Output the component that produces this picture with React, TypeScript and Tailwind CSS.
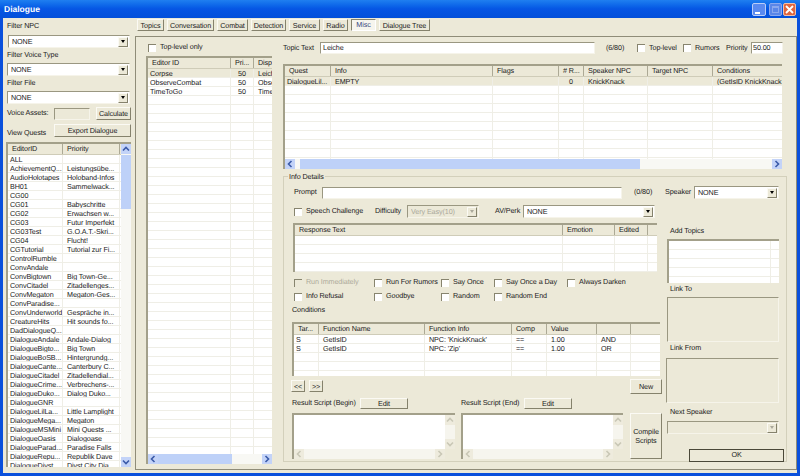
import React from "react";

const quests: [string, string][] = [
  ["ALL", ""],
  ["AchievementQ...", "Leistungsübe..."],
  ["AudioHolotapes", "Holoband-Infos"],
  ["BH01", "Sammelwack..."],
  ["CG00", ""],
  ["CG01", "Babyschritte"],
  ["CG02", "Erwachsen w..."],
  ["CG03", "Futur Imperfekt"],
  ["CG03Test", "G.O.A.T.-Skri..."],
  ["CG04", "Flucht!"],
  ["CGTutorial", "Tutorial zur Fi..."],
  ["ControlRumble", ""],
  ["ConvAndale", ""],
  ["ConvBigtown", "Big Town-Ge..."],
  ["ConvCitadel", "Zitadellenges..."],
  ["ConvMegaton", "Megaton-Ges..."],
  ["ConvParadise...", ""],
  ["ConvUnderworld", "Gespräche in..."],
  ["CreatureHits", "Hit sounds fo..."],
  ["DadDialogueQ...", ""],
  ["DialogueAndale", "Andale-Dialog"],
  ["DialogueBigto...", "Big Town"],
  ["DialogueBoSB...", "Hintergrundg..."],
  ["DialogueCante...", "Canterbury C..."],
  ["DialogueCitadel", "Zitadellendial..."],
  ["DialogueCrime...", "Verbrechens-..."],
  ["DialogueDuko...", "Dialog Duko..."],
  ["DialogueGNR", ""],
  ["DialogueLilLa...", "Little Lamplight"],
  ["DialogueMega...", "Megaton"],
  ["DialogueMSMini", "Mini Quests ..."],
  ["DialogueOasis", "Dialogoase"],
  ["DialogueParad...", "Paradise Falls"],
  ["DialogueRepu...", "Republik Dave"],
  ["DialogueDivst...", "Divst City Dia..."],
];

const sunken = "border border-t-[#9a9781] border-l-[#9a9781] border-r-[#f6f4ea] border-b-[#f6f4ea]";
const raised = "border border-t-[#fbfaf4] border-l-[#fbfaf4] border-r-[#85826c] border-b-[#85826c]";

function Arrow({ dir, faded }: { dir: "up" | "down" | "left" | "right"; faded?: boolean }) {
  const d = {
    up: "M2 6.5 L5 3.5 L8 6.5",
    down: "M2 3.5 L5 6.5 L8 3.5",
    left: "M6.5 2 L3.5 5 L6.5 8",
    right: "M3.5 2 L6.5 5 L3.5 8",
  }[dir];
  return (
    <div className={`w-[10px] h-[10px] shrink-0 ${faded ? "bg-[#eeebdd]" : "bg-[#c3d3f8]"}`}>
      <svg viewBox="0 0 10 10" className="w-full h-full">
        <path d={d} fill="none" stroke={faded ? "#c9c7b6" : "#3a5aa8"} strokeWidth="1.6" />
      </svg>
    </div>
  );
}

function HScroll({ thumb }: { thumb: string }) {
  return (
    <div className="flex h-[10px] shrink-0 bg-[#f8f8f4]">
      <Arrow dir="left" />
      <div className={`${thumb} bg-[#bed1f8]`} />
      <div className="flex-1" />
      <Arrow dir="right" />
    </div>
  );
}

function Table({
  cols,
  headers,
  rows,
  count,
  selected,
  center,
  noHeader,
  className,
  footer,
  side,
}: {
  cols: string;
  headers: string[];
  rows: string[][];
  count: number;
  selected?: number;
  center?: number[];
  noHeader?: boolean;
  className?: string;
  footer?: React.ReactNode;
  side?: React.ReactNode;
}) {
  const filled = Array.from({ length: count }, (_, i) => rows[i] ?? headers.map(() => ""));
  return (
    <div className={`flex flex-col bg-white overflow-hidden border-t-2 border-l-2 border-t-[#a3a08a] border-l-[#a3a08a] ${className}`}>
      <div className="flex flex-1 min-h-0">
        <div className="flex-1 min-w-0 flex flex-col overflow-hidden">
          {!noHeader && (
            <div className={`grid ${cols} h-[11px] shrink-0 bg-[#ece9d8] border-b border-[#cfccb8]`}>
              {headers.map((h, i) => (
                <div key={i} className="border-r border-[#aca995] pl-[4px] leading-[10px] whitespace-nowrap overflow-hidden">
                  {h}
                </div>
              ))}
            </div>
          )}
          <div className="flex-1 min-h-0 overflow-hidden">
            {filled.map((r, i) => (
              <div key={i} className={`grid ${cols} h-[9px] border-b border-[#efeee6] ${i === selected ? "bg-[#ece9d8]" : ""}`}>
                {r.map((c, j) => (
                  <div
                    key={j}
                    className={`border-r border-[#efeee6] leading-[9px] whitespace-nowrap overflow-hidden ${
                      center?.includes(j) ? "text-center" : j === 0 ? "pl-[2px]" : "pl-[4px]"
                    }`}
                  >
                    {c}
                  </div>
                ))}
              </div>
            ))}
          </div>
        </div>
        {side}
      </div>
      {footer}
    </div>
  );
}

function Select({ value, className, disabled }: { value: string; className: string; disabled?: boolean }) {
  return (
    <div className={`flex items-center h-[13px] shrink-0 pl-[3px] pr-[1px] ${sunken} ${disabled ? "bg-[#ece9d8] text-[#aaa89a]" : "bg-white"} ${className}`}>
      <span className="flex-1 leading-[10px] whitespace-nowrap overflow-hidden">{value}</span>
      <div className={`w-[10px] h-[10px] flex items-center justify-center bg-[#ece9d8] ${raised}`}>
        <div className={`border-x-[2.5px] border-x-transparent border-t-[3px] ${disabled ? "border-t-[#aaa89a]" : "border-t-black"}`} />
      </div>
    </div>
  );
}

function Check({ label, className, disabled }: { label: string; className?: string; disabled?: boolean }) {
  return (
    <div className={`flex items-center h-[9px] shrink-0 ${className ?? ""}`}>
      <div className={`w-[8px] h-[8px] shrink-0 border-t border-l border-[#87846e] ${disabled ? "bg-[#ece9d8]" : "bg-white"}`} />
      <span className={`ml-[4px] whitespace-nowrap ${disabled ? "text-[#aca99a]" : ""}`}>{label}</span>
    </div>
  );
}

function Btn({ children, className }: { children: React.ReactNode; className: string }) {
  return (
    <div className={`flex items-center justify-center text-center leading-[9px] shrink-0 bg-[#ece9d8] ${raised} ${className}`}>
      {children}
    </div>
  );
}

function ScriptBox({ className }: { className: string }) {
  return (
    <div className={`flex flex-col h-[46px] bg-white border-t-2 border-l-2 border-t-[#a3a08a] border-l-[#a3a08a] ${className}`}>
      <div className="flex flex-1">
        <div className="flex-1" />
        <div className="flex flex-col justify-between w-[10px] bg-[#f6f5ee]">
          <Arrow dir="up" faded />
          <Arrow dir="down" faded />
        </div>
      </div>
      <div className="flex h-[10px] bg-[#f6f5ee]">
        <Arrow dir="left" faded />
        <div className="flex-1" />
        <Arrow dir="right" faded />
        <div className="w-[10px] bg-[#ece9d8]" />
      </div>
    </div>
  );
}

const tabs: [string, string][] = [
  ["Topics", "w-[27px]"],
  ["Conversation", "w-[47px]"],
  ["Combat", "w-[31px]"],
  ["Detection", "w-[35px]"],
  ["Service", "w-[31px]"],
  ["Radio", "w-[25px]"],
  ["Misc", "w-[25px]"],
  ["Dialogue Tree", "w-[51px]"],
];

function LeftColumn() {
  return (
    <div className="w-[132px] shrink-0 pl-[4px] flex flex-col">
      <div className="mt-[3px] h-[10px] leading-[10px]">Filter NPC</div>
      <Select value="NONE" className="mt-[4px] ml-[1px] w-[122px]" />
      <div className="mt-[2px] h-[10px] leading-[10px]">Filter Voice Type</div>
      <Select value="NONE" className="mt-[3px] w-[123px]" />
      <div className="mt-[2px] h-[10px] leading-[10px]">Filter File</div>
      <Select value="NONE" className="mt-[3px] w-[123px]" />
      <div className="mt-[3px] flex items-center h-[13px]">
        <span className="w-[47px] whitespace-nowrap">Voice Assets:</span>
        <div className={`w-[36px] h-[12px] ${sunken}`} />
        <Btn className="ml-[6px] w-[35px] h-[13px]">Calculate</Btn>
      </div>
      <div className="mt-[4px] flex items-end h-[13px]">
        <span className="w-[47px] leading-[9px] whitespace-nowrap">View Quests</span>
        <Btn className="w-[77px] h-[13px]">Export Dialogue</Btn>
      </div>
      <Table
        className="mt-[5px] -ml-[1px] w-[125px] h-[325px]"
        cols="grid-cols-[55px_57px]"
        headers={["EditorID", "Priority"]}
        rows={quests.map((q) => [q[0], q[1]])}
        count={35}
        side={
          <div className="w-[10px] shrink-0 flex flex-col bg-[#f8f8f4]">
            <Arrow dir="up" />
            <div className="h-[54px] mt-px bg-[#bed1f8]" />
            <div className="flex-1" />
            <Arrow dir="down" />
          </div>
        }
      />
    </div>
  );
}

function TopicColumn() {
  return (
    <div className="w-[126px] shrink-0 ml-[10px] flex flex-col">
      <Check label="Top-level only" className="mt-[6px] ml-[2px]" />
      <Table
        className="mt-[4px] h-[408px]"
        cols="grid-cols-[83px_23px_20px]"
        headers={["Editor ID", "Pri...", "Disp"]}
        rows={[
          ["Corpse", "50", "Leich"],
          ["ObserveCombat", "50", "Obse"],
          ["TimeToGo", "50", "Time"],
        ]}
        count={43}
        selected={0}
        center={[1]}
        footer={<HScroll thumb="w-[74px]" />}
      />
    </div>
  );
}

function InfoDetails() {
  return (
    <div className="relative mt-[7px] w-[504px] h-[286px] border border-[#d3d0bb]">
      <div className="absolute -top-[5px] left-[4px] px-[1px] bg-[#ece9d8] leading-[10px]">Info Details</div>
      <div className="mt-[9px] ml-[10px] flex items-center h-[13px]">
        <span className="w-[28px]">Prompt</span>
        <div className={`w-[300px] h-[12px] bg-white ${sunken}`} />
        <span className="ml-[12px] w-[31px]">(0/80)</span>
        <span className="w-[29px]">Speaker</span>
        <Select value="NONE" className="w-[85px]" />
      </div>
      <div className="flex">
        <div className="w-[378px] shrink-0 pl-[8px] flex flex-col">
          <div className="mt-[6px] ml-[2px] flex items-center h-[13px]">
            <Check label="Speech Challenge" className="w-[81px]" />
            <span className="w-[32px]">Difficulty</span>
            <Select value="Very Easy(10)" disabled className="w-[72px]" />
            <span className="ml-[16px] w-[28px] whitespace-nowrap">AV/Perk</span>
            <Select value="NONE" className="w-[132px]" />
          </div>
          <Table
            className="mt-[5px] ml-[1px] w-[364px] h-[49px]"
            cols="grid-cols-[268px_52px_33px_11px]"
            headers={["Response Text", "Emotion", "Edited", ""]}
            rows={[]}
            count={4}
          />
          <div className="mt-[6px] ml-[2px] flex">
            <Check label="Run Immediately" disabled className="w-[80px]" />
            <Check label="Run For Rumors" className="w-[67px]" />
            <Check label="Say Once" className="w-[53px]" />
            <Check label="Say Once a Day" className="w-[73px]" />
            <Check label="Always Darken" />
          </div>
          <div className="mt-[5px] ml-[2px] flex">
            <Check label="Info Refusal" className="w-[80px]" />
            <Check label="Goodbye" className="w-[67px]" />
            <Check label="Random" className="w-[53px]" />
            <Check label="Random End" />
          </div>
          <div className="mt-[4px] h-[10px] leading-[10px]">Conditions</div>
          <Table
            className="mt-[7px] w-[368px] h-[54px]"
            cols="grid-cols-[25px_106px_87px_35px_50px_34px_31px]"
            headers={["Tar...", "Function Name", "Function Info", "Comp", "Value", "", ""]}
            rows={[
              ["S", "GetIsID", "NPC: 'KnickKnack'", "==", "1.00", "AND", ""],
              ["S", "GetIsID", "NPC: 'Zip'", "==", "1.00", "OR", ""],
            ]}
            count={5}
          />
          <div className="mt-[3px] flex items-start h-[15px]">
            <Btn className="mt-[1px] -ml-[1px] w-[14px] h-[12px]">&lt;&lt;</Btn>
            <Btn className="mt-[1px] ml-[4px] w-[14px] h-[12px]">&gt;&gt;</Btn>
            <Btn className="ml-auto w-[32px] h-[15px]">New</Btn>
          </div>
          <div className="mt-[4px] flex items-center h-[10px]">
            <span className="w-[68px] whitespace-nowrap">Result Script (Begin)</span>
            <Btn className="w-[48px] h-[11px]">Edit</Btn>
            <span className="ml-[53px] w-[63px] whitespace-nowrap">Result Script (End)</span>
            <Btn className="w-[48px] h-[11px]">Edit</Btn>
          </div>
          <div className="mt-[5px] flex">
            <ScriptBox className="w-[163px]" />
            <ScriptBox className="ml-[6px] w-[162px]" />
            <Btn className="ml-[7px] w-[32px] h-[46px]">
              Compile
              <br />
              Scripts
            </Btn>
          </div>
        </div>
        <div className="ml-[5px] w-[118px] shrink-0 flex flex-col">
          <div className="mt-[27px] pl-[3px] h-[10px] leading-[10px]">Add Topics</div>
          <Table
            className="mt-[3px] w-[112px] h-[44px]"
            cols="grid-cols-[102px_10px]"
            headers={["", ""]}
            rows={[]}
            count={5}
            noHeader
          />
          <div className="mt-[1px] pl-[3px] h-[10px] leading-[10px]">Link To</div>
          <div className={`mt-[3px] w-[112px] h-[45px] ${sunken}`} />
          <div className="mt-[1px] pl-[3px] h-[10px] leading-[10px]">Link From</div>
          <div className={`mt-[5px] w-[113px] -ml-[1px] h-[45px] ${sunken}`} />
          <div className="mt-[4px] pl-[3px] h-[10px] leading-[10px]">Next Speaker</div>
          <Select value="" disabled className="mt-[4px] w-[112px]" />
          <div className="mt-[15px] ml-[22px] w-[95px] h-[13px] flex items-center justify-center bg-[#ece9d8] border border-[#4a4838]">
            OK
          </div>
        </div>
      </div>
    </div>
  );
}

function RightColumn() {
  return (
    <div className="ml-[11px] w-[504px] shrink-0 flex flex-col">
      <div className="mt-[5px] flex items-center h-[12px]">
        <span className="w-[37px] whitespace-nowrap">Topic Text</span>
        <div className={`w-[275px] h-[12px] bg-white pl-[2px] leading-[10px] ${sunken}`}>Leiche</div>
        <span className="ml-[11px] w-[31px]">(6/80)</span>
        <Check label="Top-level" className="w-[46px]" />
        <Check label="Rumors" className="w-[43px]" />
        <span className="w-[25px]">Priority</span>
        <div className={`w-[32px] h-[12px] bg-white pl-[1px] leading-[10px] ${sunken}`}>50.00</div>
      </div>
      <Table
        className="mt-[10px] w-[499px] h-[105px]"
        cols="grid-cols-[46px_162px_66px_25px_64px_65px_71px]"
        headers={["Quest", "Info", "Flags", "# R...", "Speaker NPC", "Target NPC", "Conditions"]}
        rows={[["DialogueLil...", "EMPTY", "", "0", "KnickKnack", "", "(GetIsID KnickKnack"]]}
        count={10}
        selected={0}
        center={[3]}
        footer={<HScroll thumb="ml-[5px] w-[340px]" />}
      />
      <InfoDetails />
    </div>
  );
}

export default function App() {
  return (
    <div className="w-[800px] h-[476px] overflow-hidden flex flex-col bg-[#0a50dc] text-[#222] text-[7.2px] tracking-[-0.1px] [text-rendering:geometricPrecision] font-['Liberation_Sans',sans-serif]">
      <div className="h-[18px] shrink-0 flex items-center pl-[4px] pr-[4px] bg-gradient-to-b from-[#1f7ff0] via-[#0655e4] to-[#0350da]">
        <span className="flex-1 text-white text-[8.5px] tracking-normal font-bold">Dialogue</span>
        <div className="w-[14px] h-[13px] mr-[3px] rounded-[2px] bg-[#5a8af0] border border-[#b9cdf7] flex items-end pl-[2px] pb-[1px]">
          <div className="w-[5px] h-[2px] bg-white" />
        </div>
        <div className="w-[13px] h-[13px] mr-px rounded-[2px] bg-[#5a86e8] border border-[#8aa8ee] flex items-center justify-center">
          <div className="w-[7px] h-[7px] border border-t-2 border-[#8aa8ee]" />
        </div>
        <div className="w-[13px] h-[13px] rounded-[2px] bg-[#e0663f] border border-[#f0c0a8] flex items-center justify-center">
          <svg viewBox="0 0 9 9" className="w-[9px] h-[9px]">
            <path d="M1 1 L8 8 M8 1 L1 8" stroke="#fff" strokeWidth="1.8" />
          </svg>
        </div>
      </div>
      <div className="h-[455px] shrink-0 mx-[3px] flex bg-[#ece9d8]">
        <LeftColumn />
        <div className="flex-1 min-w-0 flex flex-col">
          <div className="h-[18px] shrink-0 pl-[2px] pt-[1px] flex gap-[3px]">
            {tabs.map(([t, w]) =>
              t === "Misc" ? (
                <div key={t} className={`${w} h-[12px] flex items-center justify-center bg-[#f6f5ee] text-[#3a4a80] border border-t-[#85826c] border-l-[#85826c] border-r-white border-b-white`}>
                  {t}
                </div>
              ) : (
                <Btn key={t} className={`${w} h-[12px]`}>
                  {t}
                </Btn>
              )
            )}
          </div>
          <div className="h-[434px] shrink-0 flex border border-[#8f8c78]">
            <TopicColumn />
            <RightColumn />
          </div>
        </div>
      </div>
    </div>
  );
}
